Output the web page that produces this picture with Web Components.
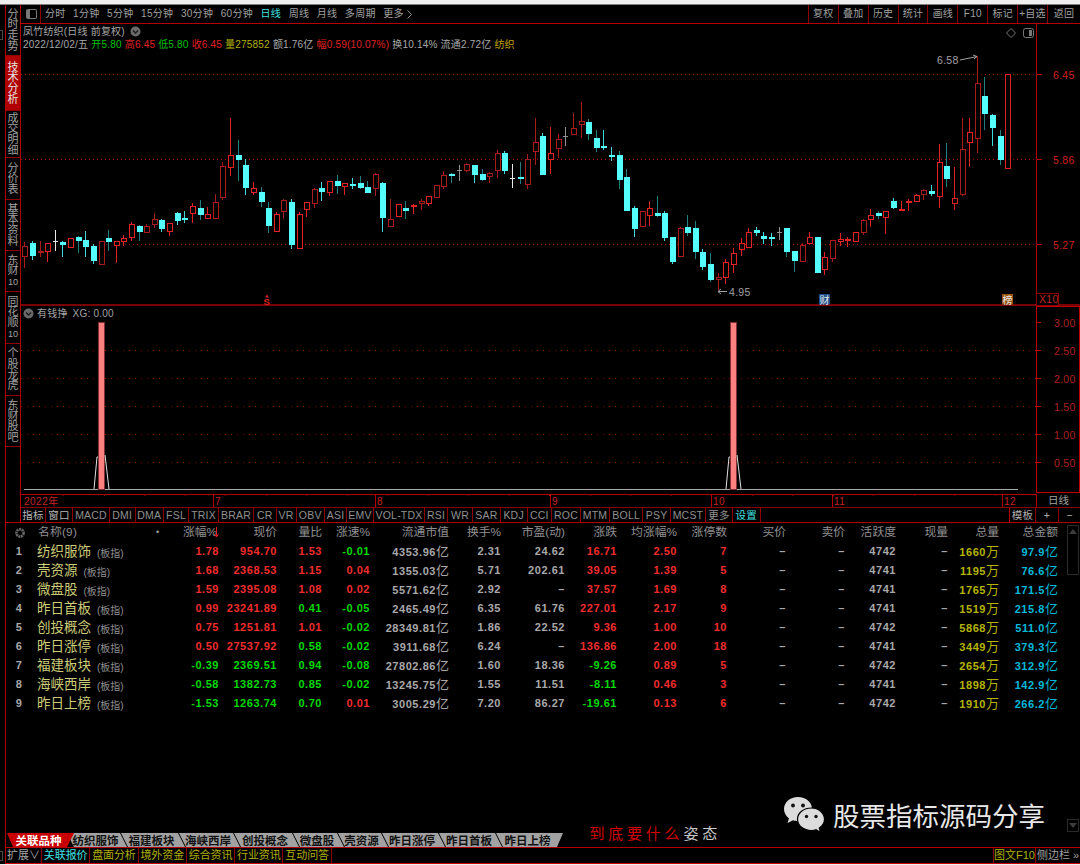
<!doctype html>
<html lang="zh">
<head>
<meta charset="utf-8">
<title>凤竹纺织</title>
<style>
  html, body { margin: 0; background: #efefef; }
  body {
    font-family: "Liberation Sans", "Noto Sans CJK SC", sans-serif;
    font-size: 11px;
    color: #a8a8a8;
    overflow: hidden;
  }
</style>
</head>
<body>
<quote-terminal></quote-terminal>

<script>
const LINE = "#8c0000";
const FRAME = "#b40000";

/* side tabs ---------------------------------------------------------- */
class SideTab extends HTMLElement {
  constructor() {
    super();
    this.attachShadow({ mode: "open" }).innerHTML = `
      <style>
        :host {
          box-sizing: border-box;
          display: flex;
          align-items: center;
          justify-content: center;
          border-bottom: 1px solid ${LINE};
          color: #a0a0a0;
          font-size: 11px;
          line-height: 10.6px;
          text-align: center;
          white-space: nowrap;
        }
        :host([active]) { background: #b00000; color: #e8e8e8; }
      </style>
      <div><slot></slot></div>`;
  }
}
customElements.define("side-tab", SideTab);

class SideTabs extends HTMLElement {
  constructor() {
    super();
    const tabs = [
      ["分<br>时<br>走<br>势", 51], ["技<br>术<br>分<br>析", 55, true], ["成<br>交<br>明<br>细", 47],
      ["分<br>价<br>表", 42], ["基<br>本<br>资<br>料", 51], ["东<br>财<br><small>10</small>", 41],
      ["同<br>花<br>顺<br><small>10</small>", 52], ["个<br>股<br>龙<br>虎", 52], ["东<br>财<br>股<br>吧", 51],
    ];
    this.attachShadow({ mode: "open" }).innerHTML = `
      <style>
        :host {
          box-sizing: border-box;
          display: flex;
          flex-direction: column;
          flex: none;
          width: 15px;
          border-right: 1px solid ${FRAME};
        }
      </style>
      <slot></slot>`;
    this.innerHTML = tabs.map(([t, h, on]) =>
      `<side-tab style="height:${h}px" ${on ? "active" : ""}>${t}</side-tab>`).join("");
  }
}
customElements.define("side-tabs", SideTabs);

/* period bar --------------------------------------------------------- */
class PeriodBar extends HTMLElement {
  constructor() {
    super();
    const periods = ["分时", "1分钟", "5分钟", "15分钟", "30分钟", "60分钟", "日线", "周线", "月线", "多周期", "更多"];
    const tools = ["复权", "叠加", "历史", "统计", "画线", "F10", "标记", "+自选", "返回"];
    this.attachShadow({ mode: "open" }).innerHTML = `
      <style>
        :host {
          box-sizing: border-box;
          display: flex;
          flex: none;
          height: 19px;
          border-bottom: 1px solid ${FRAME};
          font-size: 10px;
          line-height: 18px;
          color: #a0a0a0;
        }
        .toggle {
          box-sizing: border-box;
          display: flex;
          align-items: center;
          width: 20px;
          padding-left: 5px;
          border-right: 1px solid ${LINE};
        }
        .toggle i {
          display: block;
          box-sizing: border-box;
          width: 11px;
          height: 10px;
          border: 1px solid #777;
          border-radius: 2px;
          border-left-width: 4px;
        }
        .periods { display: flex; flex: 1; gap: 7.500px; padding-left: 4px; align-items: center; }
        .periods span { letter-spacing: .3px; white-space: nowrap; }
        .periods .on { color: #40e0e0; }
        .periods svg { margin-left: -4px; }
        .tool { box-sizing: border-box; width: 29.900px; flex: none; border-left: 1px solid ${LINE}; text-align: center; white-space: nowrap; letter-spacing: .2px; }
        .tool:last-child { width: 33px; }
      </style>
      <div class="toggle"><i></i></div>
      <div class="periods">
        ${periods.map(p => `<span class="${p === "日线" ? "on" : ""}">${p}</span>`).join("")}
        <svg width="5" height="9" viewBox="0 0 5 9"><path d="M.5 .5L4.500 4.500L.5 8.500" fill="none" stroke="#909090"/></svg>
      </div>
      ${tools.map(t => `<div class="tool">${t}</div>`).join("")}`;
  }
}
customElements.define("period-bar", PeriodBar);

/* candle data: [kind, high, bodyTop, bodyBottom, low], in 3x crop pixels per segment
   r/R red hollow (R darker), c/C cyan (C dark wick), w/W white/grey doji */
const SEGMENTS = [
  { y0: 110, rows: [
    ["R",395,408,437,475],["c",393,398,434,450],["R",393,422,425,442],["r",398,400,423,455],["w",360,393,395,422],
    ["c",393,397,403,442],["r",385,385,410,410],["C",378,380,390,428],["c",364,391,408,442],["c",403,408,450,462],
    ["R",394,394,462,462],["C",360,385,392,422],["r",394,394,405,460],["r",376,385,392,408],["r",337,342,380,393],
    ["C",346,347,364,392],["R",343,347,367,367],["R",310,326,341,355],["c",326,329,354,367],["r",338,340,362,377],
    ["c",307,308,329,346],["c",303,324,328,338],["r",280,288,310,338],["C",271,295,313,329],["r",292,313,323,323],
    ["R",253,277,323,323],["R",155,169,260,270],["r",24,136,170,198],["C",90,135,147,212],["c",148,166,232,256],
    ["r",215,234,245,256],["C",230,246,272,290],["C",277,295,346,368],["r",305,313,362,362],["R",268,270,304,326],
    ["c",268,277,403,416],["r",306,313,413,413],["r",277,277,297,320],["R",233,238,278,295],["c",217,233,243,272],
    ["r",212,213,245,258],["C",194,213,225,251],["r",220,220,227,255],["c",204,221,224,238],
  ]},
  { y0: 90, rows: [
    ["C",258,278,290,298],["C",272,290,305,305],["R",250,253,295,318],["c",277,278,380,425],["R",327,386,409,409],
    ["r",342,342,377,380],["C",332,354,359,386],["r",342,344,349,373],["R",326,332,338,360],["r",319,319,339,347],
    ["R",284,286,320,320],["R",243,256,287,298],["C",248,251,254,278],["W",225,240,244,273],["R",220,221,241,246],
    ["c",226,226,251,278],["C",238,252,267,273],["R",247,248,257,278],["R",180,190,241,264],["c",184,190,239,252],
    ["w",221,264,266,293],["C",216,260,263,281],["R",193,208,282,298],["R",84,157,184,225],["c",130,138,251,255],
    ["r",110,190,208,252],["R",133,146,173,203],["W",112,138,140,168],["R",70,113,132,133],["R",37,92,101,143],
    ["C",87,95,130,150],["C",120,144,171,185],["c",120,168,171,181],["c",172,195,198,213],["C",184,195,266,298],
    ["C",238,260,360,360],["c",349,355,413,441],["R",363,364,409,411],["r",332,355,374,407],["C",318,368,374,380],
    ["c",363,369,440,453],["c",440,441,514,522],["R",410,415,499,499],["C",375,412,427,437],["C",393,415,484,507],
    ["c",476,485,527,541],["C",489,523,566,575],["R",549,562,568,600],
  ]},
  { y0: 50, rows: [
    ["r",627,635,682,703],["r",595,610,641,668],["r",563,579,598,617],["r",535,545,590,590],["c",532,540,547,557],
    ["c",547,558,565,583],["c",548,560,565,588],["W",532,545,548,570],["C",535,535,603,622],["C",603,604,629,665],
    ["R",578,584,632,632],["r",547,561,580,580],["c",560,560,666,666],["r",606,622,657,675],["R",570,571,623,635],
    ["r",550,566,572,588],["r",562,566,571,590],["r",545,547,572,572],["R",508,509,546,556],["r",477,496,508,530],
    ["C",483,490,495,508],["r",484,484,502,552],["c",445,452,470,478],["r",452,476,481,482],["r",448,452,457,482],
    ["r",431,436,454,455],["R",418,419,432,450],["c",405,424,430,438],["r",282,337,437,473],["C",280,347,383,412],
    ["r",352,445,458,480],["R",205,298,432,437],["r",205,246,277,352],["R",18,98,265,308],["C",80,137,188,240],
    ["c",193,196,231,288],["C",240,259,326,345],["r",73,73,355,355],
  ]},
];
const STEP = 7.62;
const X0 = 24.3;
const candleX = i => Math.round(X0 + STEP * i);

function candleMarkup() {
  const colors = {
    r: ["#e02222", "#e02222"], R: ["#a81c1c", "#a81c1c"],
    c: ["#55ffff", "#40d8d8"], C: ["#55ffff", "#1f7f7f"],
    w: ["#e8e8e8", "#e8e8e8"], W: ["#909090", "#909090"],
  };
  let out = "";
  let i = 0;
  for (const { y0, rows } of SEGMENTS) {
    for (const [kind, high, top, bottom, low] of rows) {
      const x = candleX(i++);
      const y = v => Math.round(y0 + v / 3);
      const [body, wick] = colors[kind];
      const hy = y(high), ty = y(top), by = Math.max(y(bottom), y(top) + 1), ly = y(low);
      out += `<path d="M${x + .5} ${hy}V${ty}M${x + .5} ${by}V${ly}" stroke="${wick}"/>`;
      if (kind === "w" || kind === "W") {
        out += `<path d="M${x - 2} ${ty + .5}H${x + 3}" stroke="${body}"/>`;
      } else if (kind === "c" || kind === "C") {
        out += `<rect x="${x - 2.5}" y="${ty}" width="6" height="${by - ty + 1}" fill="${body}"/>`;
      } else {
        out += `<rect x="${x - 2}" y="${ty + .5}" width="5" height="${by - ty}" fill="#000" stroke="${body}"/>`;
      }
    }
  }
  return out;
}

/* kline panel -------------------------------------------------------- */
class KlinePanel extends HTMLElement {
  constructor() {
    super();
    const prices = [[74.5, "6.45"], [159.5, "5.86"], [244.5, "5.27"]];
    this.attachShadow({ mode: "open" }).innerHTML = `
      <style>
        :host { display: block; position: relative; flex: none; height: 282px; }
        svg { display: block; shape-rendering: crispEdges; }
        text { font-family: "Liberation Sans", "Noto Sans CJK SC", sans-serif; font-size: 10.5px; shape-rendering: auto; letter-spacing: .3px; }
        .info { position: absolute; left: 2px; top: 1px; line-height: 13px; font-size: 10px; color: #a8a8a8; white-space: nowrap; }
        .info > div { display: flex; gap: 3px; letter-spacing: .2px; }
        .title { align-items: center; }
        .title svg { margin-left: 2px; shape-rendering: auto; }
        .w { color: #a8a8a8; } .g { color: #00c000; } .r { color: #e02020; } .y { color: #b0b000; } .d { color: #c0a000; }
      </style>
      <svg width="1059" height="282" viewBox="21 24 1059 282">
        <g stroke="#a00000" stroke-dasharray="1 3">
          <path d="M21 74.5H1036"/><path d="M21 159.5H1036"/><path d="M125 244.5H1036"/>
        </g>
        ${candleMarkup()}
        <path d="M1036.5 24V293" stroke="${FRAME}"/>
        ${prices.map(([y, t]) => `
          <path d="M1036 ${y}H1042" stroke="${FRAME}"/>
          <text x="1053" y="${y + 4}" fill="#d02020">${t}</text>`).join("")}
        <path d="M21 305H1080" stroke="#7a0000" stroke-width="2"/>
        <rect x="1036.5" y="293.5" width="22" height="12" fill="#000" stroke="${LINE}"/>
        <text x="1039" y="303" fill="#c02020">X10</text>

        <text x="937" y="64" fill="#a0a0a0">6.58</text>
        <g style="shape-rendering:auto" stroke="#a0a0a0" fill="none">
          <path d="M960 60L977 56.5M973 55L977 56.5L974 59"/>
          <path d="M727 291.5H718M721 289L718 291.5L721 294"/>
          <path d="M1011 28.500L1015.500 33L1011 37.500L1006.500 33Z" stroke="#777"/>
          <rect x="1023.500" y="28.500" width="10" height="9" rx="2" stroke="#777"/>
          <rect x="1029" y="30" width="3" height="6" fill="#777" stroke="none"/>
        </g>
        <text x="729" y="295.500" fill="#a0a0a0">4.95</text>

        <g style="shape-rendering:auto">
          <path d="M265 297.500L267 294.500L269 297.500Z" fill="#e02020"/>
          <text x="263.500" y="305" fill="#e02020" font-weight="700" style="font-size:9.500px">S</text>
          <rect x="819" y="294" width="11" height="10.500" fill="#1c4f8c"/>
          <text x="819.500" y="303.500" fill="#e8e8e8" style="font-size:10px;letter-spacing:0">财</text>
          <rect x="1002" y="294" width="11" height="10.500" fill="#9a5410"/>
          <text x="1002.500" y="303.500" fill="#e8e8e8" style="font-size:10px;letter-spacing:0">榜</text>
        </g>
      </svg>
      <div class="info">
        <div class="title"><span>凤竹纺织(日线 前复权)</span>
          <svg width="11" height="11" viewBox="0 0 11 11"><circle cx="5.500" cy="5.500" r="5" fill="#6a6a6a"/><path d="M3 4.500L5.500 7L8 4.500" fill="none" stroke="#1a1a1a" stroke-width="1.300"/></svg>
        </div>
        <div>
          <span class="w">2022/12/02/五</span>
          <span class="g">开5.80</span><span class="r">高6.45</span><span class="g">低5.80</span><span class="r">收6.45</span>
          <span class="y">量275852</span><span class="w">额1.76亿</span><span class="r">幅0.59(10.07%)</span>
          <span class="w">换10.14%</span><span class="w">流通2.72亿</span><span class="d">纺织</span>
        </div>
      </div>`;
  }
}
customElements.define("kline-panel", KlinePanel);

/* indicator panel ---------------------------------------------------- */
class SignalPanel extends HTMLElement {
  constructor() {
    super();
    const levels = [[323.5, "3.00"], [351.5, "2.50"], [379.5, "2.00"], [407.5, "1.50"], [435.5, "1.00"], [463.5, "0.50"]];
    const spike = i => {
      const x = candleX(i);
      return `
        <rect x="${x - 3}" y="323.500" width="6" height="167" fill="#ff8080" stroke="#803030"/>
        <path style="shape-rendering:auto" d="M${x - 7} 490L${x - 4} 458L${x - 3} 458M${x + 4} 456L${x + 8} 490" fill="none" stroke="#e0e0e0"/>`;
    };
    this.attachShadow({ mode: "open" }).innerHTML = `
      <style>
        :host { display: block; position: relative; flex: none; height: 188px; }
        svg { display: block; shape-rendering: crispEdges; }
        text { font-family: "Liberation Sans", "Noto Sans CJK SC", sans-serif; font-size: 10.5px; letter-spacing: .3px; }
        .head { position: absolute; left: 2px; top: 1px; display: flex; align-items: center; gap: 3px; color: #a0a0a0; font-size: 10px; line-height: 13px; letter-spacing: .2px; white-space: nowrap; }
        .head svg { shape-rendering: auto; }
        .head .xg { margin-left: 2px; }
      </style>
      <svg width="1059" height="188" viewBox="21 307 1059 188">
        <g stroke="#8c0000" stroke-dasharray="1 5">
          ${levels.slice(1).map(([y]) => `<path d="M21 ${y}H1036"/>`).join("")}
        </g>
        <path d="M24 490.500H1018" stroke="#a8a8a8"/>
        ${spike(10)}${spike(93)}
        <rect x="1036.500" y="307.500" width="43" height="186" fill="#000" stroke="#c00000" stroke-width="1.500"/>
        ${levels.map(([y, t]) => `
          <path d="M1037 ${y}H1041" stroke="#c00000"/>
          <text x="1054" y="${y + 4}" fill="#b02020">${t}</text>`).join("")}
      </svg>
      <div class="head">
        <svg width="11" height="11" viewBox="0 0 11 11"><circle cx="5.500" cy="5.500" r="5" fill="#6a6a6a"/><path d="M3 4.500L5.500 7L8 4.500" fill="none" stroke="#1a1a1a" stroke-width="1.300"/></svg>
        <span>有钱挣</span><span class="xg">XG: 0.00</span>
      </div>`;
  }
}
customElements.define("signal-panel", SignalPanel);

/* date axis ---------------------------------------------------------- */
class DateAxis extends HTMLElement {
  constructor() {
    super();
    const marks = [[22, "2022年", false], [213, "7", true], [375, "8", true], [550, "9", true], [711, "10", true], [832, "11", true], [1002, "12", true]];
    let ticks = "";
    for (let x = 63; x < 1030; x += 40.500) ticks += `<path d="M${Math.round(x) + .5} 495V497"/>`;
    this.attachShadow({ mode: "open" }).innerHTML = `
      <style>
        :host { display: flex; flex: none; height: 13px; border-bottom: 1px solid ${LINE}; }
        svg { display: block; flex: none; shape-rendering: crispEdges; }
        text { font-family: "Liberation Sans", "Noto Sans CJK SC", sans-serif; font-size: 10px; letter-spacing: .5px; }
        .unit { flex: 1; border-left: 1px solid ${FRAME}; text-align: center; font-size: 10.5px; line-height: 13px; color: #a0a0a0; }
      </style>
      <svg width="1015" height="13" viewBox="21 495 1015 13">
        <path d="M21 495.500H1036" stroke="${FRAME}"/>
        <g stroke="${LINE}">${ticks}</g>
        ${marks.map(([x, t, sep]) => `
          ${sep ? `<path d="M${x + .5} 495V508" stroke="${FRAME}"/>` : ""}
          <text x="${x + 2}" y="505.500" fill="#c82020">${t}</text>`).join("")}
      </svg>
      <div class="unit">日线</div>`;
  }
}
customElements.define("date-axis", DateAxis);

/* indicator tabs ----------------------------------------------------- */
class IndicatorTabs extends HTMLElement {
  constructor() {
    super();
    const tabs = [["指标",25],["窗口",27],["MACD",37],["DMI",25.500],["DMA",28.500],["FSL",25],["TRIX",30],["BRAR",35],["CR",22.500],["VR",20],["OBV",28.500],["ASI",22],["EMV",27],["VOL-TDX",51],["RSI",23],["WR",25],["SAR",27.700],["KDJ",26.900],["CCI",24.400],["ROC",29],["MTM",29],["BOLL",33.400],["PSY",27.600],["MCST",35],["更多",27],["设置",27.700]];
    const cell = ([t, w]) => `<span class="${t === "设置" ? "on" : ""}${t === "指标" || t === "窗口" ? " cn" : ""}" style="width:${w}px">${t}</span>`;
    this.attachShadow({ mode: "open" }).innerHTML = `
      <style>
        :host { display: flex; flex: none; height: 15px; font-size: 10.5px; line-height: 14px; color: #909090; }
        span { box-sizing: border-box; flex: none; border-right: 1px solid ${LINE}; text-align: center; white-space: nowrap; letter-spacing: .2px; }
        .cn { color: #b8b8b8; }
        .on { color: #40e0e0; }
        .fill { flex: 1; }
        .end { color: #b0b0b0; }
      </style>
      ${tabs.map(cell).join("")}
      <div class="fill"></div>
      <span class="end" style="width:27px;border-left:1px solid ${FRAME}">模板</span>
      <span class="end" style="width:23px">+</span>
      <span class="end" style="width:21px;border-right:0">−</span>`;
  }
}
customElements.define("indicator-tabs", IndicatorTabs);

/* quote table -------------------------------------------------------- */
const COLUMNS = ["", "名称(9)", "涨幅%", "现价", "量比", "涨速%", "流通市值", "换手%", "市盈(动)", "涨跌", "均涨幅%", "涨停数", "买价", "卖价", "活跃度", "现量", "总量", "总金额"];
const QUOTES = [
  ["纺织服饰", "1.78", "954.70", "1.53", "-0.01", "4353.96", "2.31", "24.62", "16.71", "2.50", "7", "4742", "1660", "97.9"],
  ["壳资源", "1.68", "2368.53", "1.15", "0.04", "1355.03", "5.71", "202.61", "39.05", "1.39", "5", "4741", "1195", "76.6"],
  ["微盘股", "1.59", "2395.08", "1.08", "0.02", "5571.62", "2.92", "–", "37.57", "1.69", "8", "4741", "1765", "171.5"],
  ["昨日首板", "0.99", "23241.89", "0.41", "-0.05", "2465.49", "6.35", "61.76", "227.01", "2.17", "9", "4741", "1519", "215.8"],
  ["创投概念", "0.75", "1251.81", "1.01", "-0.02", "28349.81", "1.86", "22.52", "9.36", "1.00", "10", "4742", "5868", "511.0"],
  ["昨日涨停", "0.50", "27537.92", "0.58", "-0.02", "3911.68", "6.24", "–", "136.86", "2.00", "18", "4741", "3449", "379.3"],
  ["福建板块", "-0.39", "2369.51", "0.94", "-0.08", "27802.86", "1.60", "18.36", "-9.26", "0.89", "5", "4742", "2654", "312.9"],
  ["海峡西岸", "-0.58", "1382.73", "0.85", "-0.02", "13245.75", "1.55", "11.51", "-8.11", "0.46", "3", "4741", "1898", "142.9"],
  ["昨日上榜", "-1.53", "1263.74", "0.70", "0.01", "3005.29", "7.20", "86.27", "-19.61", "0.13", "6", "4742", "1910", "266.2"],
];

class QuoteTable extends HTMLElement {
  constructor() {
    super();
    const sign = (v, base = 0) => (parseFloat(v) > base ? "r" : "g");
    const head = COLUMNS.map((c, i) => {
      if (i === 0) return `<div class="gear"><svg width="12" height="12" viewBox="0 0 12 12"><circle cx="6" cy="6" r="3.600" fill="none" stroke="#666" stroke-width="2.600" stroke-dasharray="2 .6"/></svg></div>`;
      if (i === 1) return `<div class="hn">${c}<i>•</i></div>`;
      if (i === 2) return `<div class="h sort">${c}<svg width="5" height="11" viewBox="0 0 5 11"><path d="M2.500 0V10M.5 7L2.500 10L4.500 7" fill="none" stroke="#e02020"/></svg></div>`;
      return `<div class="h">${c}</div>`;
    }).join("");
    const rows = QUOTES.map((q, n) => {
      const [name, pct, price, ratio, speed, cap, turn, pe, chg, avg, lim, act, vol, amt] = q;
      const up = sign(pct);
      return `
        <div class="no">${n + 1}</div>
        <div class="name">${name}<small>(板指)</small></div>
        <div class="${up}">${pct}</div><div class="${up}">${price}</div>
        <div class="${sign(ratio, 1)}">${ratio}</div><div class="${sign(speed)}">${speed}</div>
        <div class="w">${cap}<u>亿</u></div><div class="w">${turn}</div><div class="w">${pe}</div>
        <div class="${sign(chg)}">${chg}</div><div class="r">${avg}</div><div class="r">${lim}</div>
        <div class="w">–</div><div class="w">–</div><div class="w">${act}</div><div class="w">–</div>
        <div class="y">${vol}<u>万</u></div><div class="c">${amt}<u>亿</u></div>`;
    }).join("");
    this.attachShadow({ mode: "open" }).innerHTML = `
      <style>
        :host { display: block; flex: 1; min-height: 0; position: relative; }
        .grid {
          display: grid;
          grid-template-columns: 25px 134px 54px 58px 45px 48px 79px 52px 64px 52px 60px 50px 59px 59px 51px 52px 51px 59px;
          grid-auto-rows: 19px;
          font: 700 11px/19px "Liberation Sans", "Noto Sans CJK SC", sans-serif;
          letter-spacing: .55px;
          text-align: right;
          white-space: nowrap;
        }
        .grid > div { min-width: 0; }
        .h, .hn { font-size: 11.800px; font-weight: 400; color: #909090; letter-spacing: 0; }
        .sort svg { vertical-align: -2px; margin-left: -3px; }
        .hn { text-align: left; padding-left: 7px; position: relative; letter-spacing: .2px; }
        .hn i { position: absolute; left: 125px; font-style: normal; color: #a0a0a0; font-size: 9px; }
        .gear { display: flex; align-items: center; padding-left: 8px; }
        .no { text-align: center; color: #a8a8a8; padding-left: 1px; }
        .name { text-align: left; font-size: 13.500px; font-weight: 400; color: #cccc78; padding-left: 6px; letter-spacing: 0; }
        .name small { font-size: 10px; color: #909090; margin-left: 6px; vertical-align: -1px; }
        u { text-decoration: none; font-weight: 400; font-size: 13px; letter-spacing: 0; }
        .r { color: #f02c2c; } .g { color: #00d800; } .w { color: #a8a8a8; } .y { color: #b4b400; } .c { color: #00b8d8; }
        .bar { position: absolute; right: 1px; top: 2px; width: 10px; height: 48px; border: 1px solid #2a2a2a; }
        .bar i { display: block; width: 0; margin: 3px auto; border: 4px solid transparent; border-top: 0; border-bottom: 5px solid #3c3c3c; }
        .down { position: absolute; right: 1px; bottom: 1px; width: 10px; height: 11px; border: 1px solid #2a2a2a; }
        .down i { display: block; width: 0; margin: 3px auto; border: 4px solid transparent; border-bottom: 0; border-top: 5px solid #3c3c3c; }
      </style>
      <div class="grid">${head}${rows}</div>
      <div class="bar"><i></i></div>
      <div class="down"><i></i></div>`;
  }
}
customElements.define("quote-table", QuoteTable);

/* related tabs ------------------------------------------------------- */
class RelatedTabs extends HTMLElement {
  constructor() {
    super();
    const tabs = [["关联品种",60],["纺织服饰",54],["福建板块",58],["海峡西岸",55],["创投概念",59],["微盘股",45],["壳资源",44],["昨日涨停",57],["昨日首板",57],["昨日上榜",60]];
    this.attachShadow({ mode: "open" }).innerHTML = `
      <style>
        :host { display: flex; flex: none; height: 14px; padding-left: 1px; font: 700 11.500px/14px "Noto Sans CJK SC", sans-serif; }
        span {
          box-sizing: border-box;
          flex: none;
          margin-right: -7px;
          padding: 0 6px 0 2px;
          background: #a2a2a2;
          color: #111;
          text-align: center;
          clip-path: polygon(0 0, calc(100% - 8px) 0, calc(100% - 1px) 100%, 7px 100%);
        }
        span.on {
          background: #c80000;
          color: #fff;
          clip-path: polygon(0 0, 100% 0, calc(100% - 7px) 100%, 6px 100%);
          z-index: 1;
        }
        span:last-child { clip-path: polygon(0 0, 100% 0, calc(100% - 6px) 100%, 7px 100%); }
      </style>
      ${tabs.map(([t, w], i) => `<span class="${i ? "" : "on"}" style="width:${w + 7}px">${t}</span>`).join("")}`;
  }
}
customElements.define("related-tabs", RelatedTabs);

/* watermark over the empty table area -------------------------------- */
class BrandMark extends HTMLElement {
  constructor() {
    super();
    this.attachShadow({ mode: "open" }).innerHTML = `
      <style>
        :host { position: absolute; right: 35px; bottom: 29px; display: flex; align-items: flex-end; gap: 62px; white-space: nowrap; }
        .slogan { font: 400 15px/18px "Noto Sans CJK SC", sans-serif; letter-spacing: 3.800px; color: #c8c8c8; margin-bottom: -7px; }
        .slogan b { font-weight: 400; color: #d00000; }
        .mark { display: flex; align-items: center; gap: 8px; padding-bottom: 1px; }
        .name { font: 400 26.500px/36px "Noto Sans CJK SC", sans-serif; color: #e8e8e8; }
      </style>
      <div class="slogan"><b>到底要什么</b>姿态</div>
      <div class="mark">
        <svg width="42" height="38" viewBox="0 0 42 38">
          <path d="M15 1C7 1 1 6.500 1 13C1 17 3 20 6 22.500L4.500 27L10 24.300C12 25 13.500 25.200 15 25.200C23 25.200 29 19.700 29 13S23 1 15 1Z" fill="#dcdcdc"/>
          <circle cx="10" cy="9.500" r="1.900" fill="#111"/><circle cx="20" cy="9.500" r="1.900" fill="#111"/>
          <path d="M28.500 12C20.500 12 14.500 17 14.500 23.300S20.500 34.500 28.500 34.500C30 34.500 31.500 34.300 33 33.700L37.500 36.500L36.300 32C39.500 29.800 41.500 26.800 41.500 23.300C41.500 17 35.500 12 28.500 12Z" fill="#dcdcdc" stroke="#000" stroke-width="1.200"/>
          <circle cx="23.500" cy="20.500" r="1.700" fill="#111"/><circle cx="33" cy="20.500" r="1.700" fill="#111"/>
        </svg>
        <span class="name">股票指标源码分享</span>
      </div>`;
  }
}
customElements.define("brand-mark", BrandMark);

/* status bar --------------------------------------------------------- */
class StatusBar extends HTMLElement {
  constructor() {
    super();
    const links = ["关联报价", "盘面分析", "境外资金", "综合资讯", "行业资讯", "互动问答"];
    this.attachShadow({ mode: "open" }).innerHTML = `
      <style>
        :host {
          box-sizing: border-box;
          display: flex;
          flex: none;
          height: 17px;
          border-top: 1px solid ${FRAME};
          border-bottom: 1px solid #c80000;
          font-size: 11px;
          line-height: 15px;
          white-space: nowrap;
        }
        div { box-sizing: border-box; flex: none; border-right: 1px solid ${LINE}; text-align: center; }
        .more { width: 36px; color: #a8a8a8; }
        .link { width: 48.300px; color: #b0b000; letter-spacing: -.1px; }
        .link.on { color: #40e0e0; }
        .fill { flex: 1; border-right: 1px solid ${LINE}; }
        .f10 { width: 42px; color: #b0b000; }
        .side { width: 44px; border-right: 0; color: #a0a0a0; }
      </style>
      <div class="more">扩展∨</div>
      ${links.map((t, i) => `<div class="link ${i ? "" : "on"}">${t}</div>`).join("")}
      <div class="fill"></div>
      <div class="f10">图文F10</div>
      <div class="side">侧边栏 »</div>`;
  }
}
customElements.define("status-bar", StatusBar);

/* page --------------------------------------------------------------- */
class QuoteTerminal extends HTMLElement {
  constructor() {
    super();
    this.attachShadow({ mode: "open" }).innerHTML = `
      <style>
        :host {
          box-sizing: border-box;
          display: flex;
          flex-direction: column;
          position: relative;
          height: 860px;
          margin-top: 4px;
          padding-left: 5px;
          background: #000;
          border-top: 1px solid #808080;
        }
        .frame {
          display: flex;
          flex-direction: column;
          flex: 1;
          min-height: 0;
          border-left: 1px solid ${FRAME};
        }
        .upper { display: flex; flex: none; height: 517px; border-bottom: 1px solid ${FRAME}; }
        .main { display: flex; flex-direction: column; flex: 1; min-width: 0; }
        .lower { display: flex; flex-direction: column; flex: 1; min-height: 0; position: relative; }
        .grip { position: absolute; left: 0; width: 2px; height: 8px; border: 1px solid #4a4a4a; border-left: 0; }
      </style>
      <div class="grip" style="top:25px"></div>
      <div class="grip" style="top:846px"></div>
      <div class="frame">
        <div class="upper">
          <side-tabs></side-tabs>
          <div class="main">
            <period-bar></period-bar>
            <kline-panel></kline-panel>
            <signal-panel></signal-panel>
            <date-axis></date-axis>
            <indicator-tabs></indicator-tabs>
          </div>
        </div>
        <div class="lower">
          <quote-table></quote-table>
          <related-tabs></related-tabs>
          <status-bar></status-bar>
          <brand-mark></brand-mark>
        </div>
      </div>`;
  }
}
customElements.define("quote-terminal", QuoteTerminal);
</script>
</body>
</html>
